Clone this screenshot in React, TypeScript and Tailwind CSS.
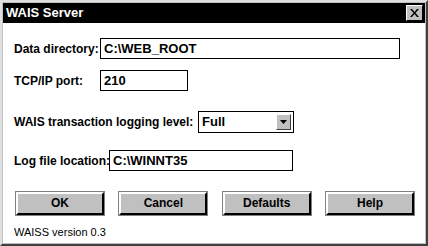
import { useState } from "react";

function Field({ value, className }: { value: string; className: string }) {
  return (
    <div className={`h-[21px] shrink-0 border border-black bg-white px-[3px] text-[13px] font-bold leading-[19px] ${className}`}>
      {value}
    </div>
  );
}

function Btn({ label }: { label: string }) {
  return (
    <button className="h-[23px] w-[88px] border-2 border-t-white border-l-white border-r-black border-b-black bg-[#c0c0c0] text-[12px] font-bold leading-[19px] text-black outline outline-1 outline-[#808080]">
      {label}
    </button>
  );
}

export default function App() {
  const [level] = useState("Full");

  return (
    <div
      className="h-[246px] w-[428px] overflow-hidden bg-[#c0c0c0] text-black"
      style={{ fontFamily: '"Liberation Sans", Arial, sans-serif' }}
    >
      <div className="h-full w-full border-2 border-t-[#dfdfdf] border-l-[#dfdfdf] border-r-[#404040] border-b-[#404040] p-[1px]">
        <div className="flex h-full flex-col">
          {/* title bar */}
          <div className="flex h-[20px] shrink-0 items-center justify-between bg-black pl-[3px] pr-[2px]">
            <span className="text-[13px] font-bold text-white">WAIS Server</span>
            <div className="flex h-[16px] w-[17px] items-center justify-center border border-t-white border-l-white border-r-black border-b-black bg-[#c0c0c0]">
              <svg width="9" height="8" viewBox="0 0 9 8">
                <path d="M0 0h2l2.5 3 2.5-3h2L5.5 4 9 8H7L4.5 5 2 8H0l3.5-4z" fill="black" />
              </svg>
            </div>
          </div>

          {/* body */}
          <div className="flex min-h-0 flex-1 flex-col bg-white pl-[11px] pr-[5px] whitespace-nowrap">
            <div className="mt-[15px] flex h-[21px] items-center">
              <span className="w-[86px] shrink-0 text-[12px] font-bold leading-none">Data directory:</span>
              <Field value="C:\WEB_ROOT" className="w-[300px]" />
            </div>

            <div className="mt-[11px] flex h-[21px] items-center">
              <span className="w-[86px] shrink-0 text-[12px] font-bold leading-none">TCP/IP port:</span>
              <Field value="210" className="w-[88px]" />
            </div>

            <div className="mt-[20px] flex h-[22px] items-center">
              <span className="w-[184px] shrink-0 text-[12px] font-bold leading-none">WAIS transaction logging level:</span>
              <div className="flex h-[22px] w-[96px] shrink-0 items-center justify-between border border-black bg-white pl-[3px] pr-[2px]">
                <span className="text-[13px] font-bold">{level}</span>
                <div className="flex h-[16px] w-[15px] items-center justify-center border border-t-white border-l-white border-r-[#404040] border-b-[#404040] bg-[#c0c0c0]">
                  <svg width="7" height="4" viewBox="0 0 7 4">
                    <path d="M0 0h7L3.5 4z" fill="black" />
                  </svg>
                </div>
              </div>
            </div>

            <div className="mt-[17px] flex h-[21px] items-center">
              <span className="w-[95px] shrink-0 text-[12px] font-bold leading-none">Log file location:</span>
              <Field value="C:\WINNT35" className="w-[184px]" />
            </div>

            <div className="mt-[21px] flex h-[23px] justify-between pl-[2px] pr-[6px]">
              <Btn label="OK" />
              <Btn label="Cancel" />
              <Btn label="Defaults" />
              <Btn label="Help" />
            </div>

            <div className="mt-[11px] text-[11px] leading-[13px]">WAISS version 0.3</div>
          </div>
        </div>
      </div>
    </div>
  );
}
